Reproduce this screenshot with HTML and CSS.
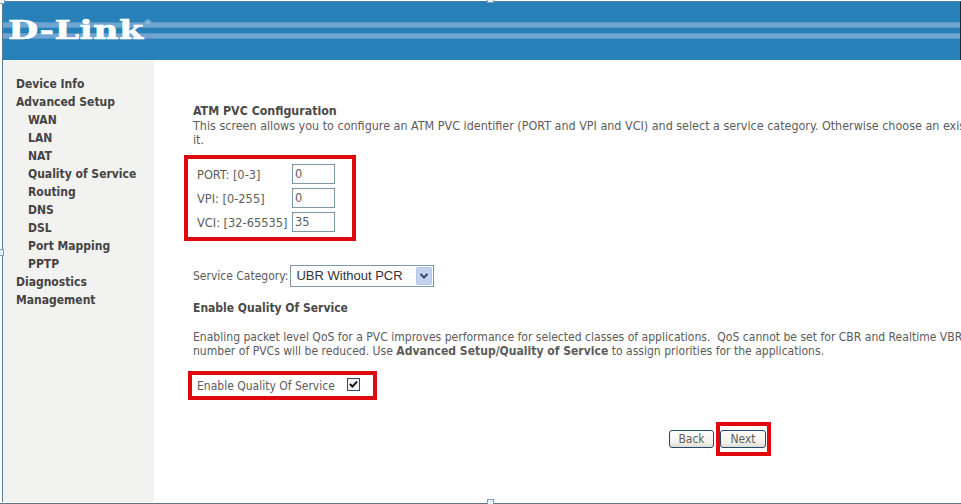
FILE: index.html
```html
<!DOCTYPE html>
<html lang="en">
<head>
    <meta charset="UTF-8">
    <title>ADSL Router - ATM PVC Configuration</title>
    <link rel="stylesheet" href="styles.css">
</head>
<body>
    <div class="frame">
        <div class="header">
            <div class="logo">D-Link<sup class="reg">®</sup></div>
        </div>
        <div class="main">
            <div class="menu">
                <a class="menu-item">Device Info</a>
                <a class="menu-item">Advanced Setup</a>
                <a class="menu-item sub">WAN</a>
                <a class="menu-item sub">LAN</a>
                <a class="menu-item sub">NAT</a>
                <a class="menu-item sub">Quality of Service</a>
                <a class="menu-item sub">Routing</a>
                <a class="menu-item sub">DNS</a>
                <a class="menu-item sub">DSL</a>
                <a class="menu-item sub">Port Mapping</a>
                <a class="menu-item sub">PPTP</a>
                <a class="menu-item">Diagnostics</a>
                <a class="menu-item">Management</a>
            </div>
            <div class="content">
                <div class="intro">
                    <b class="title">ATM PVC Configuration</b><br>
                    This screen allows you to configure an ATM PVC identifier (PORT and VPI and VCI) and select a service category. Otherwise choose an existing interface by selecting it in the list below to modify<br>
                    it.
                </div>
                <div class="mark port-box">
                    <div class="form-row">
                        <label class="port-label" for="port">PORT: [0-3]</label>
                        <input class="num" id="port" type="text" value="0">
                    </div>
                    <div class="form-row">
                        <label class="port-label" for="vpi">VPI: [0-255]</label>
                        <input class="num" id="vpi" type="text" value="0">
                    </div>
                    <div class="form-row">
                        <label class="port-label" for="vci">VCI: [32-65535]</label>
                        <input class="num" id="vci" type="text" value="35">
                    </div>
                </div>
                <div class="service-row">
                    <label for="category">Service Category:</label>
                    <span class="select-wrap">
                        <select class="select" id="category">
                            <option selected>UBR Without PCR</option>
                            <option>UBR With PCR</option>
                            <option>CBR</option>
                        </select>
                        <svg class="select-arrow" width="16" height="18" viewBox="0 0 16 18">
                            <rect x="0.5" y="0.5" width="15" height="17" rx="1.5" fill="#c3d3ee" stroke="#b4c6e6"/>
                            <path d="M4.5 7 8 10.5 11.5 7" fill="none" stroke="#33456b" stroke-width="2"/>
                        </svg>
                    </span>
                </div>
                <div class="qos-title">Enable Quality Of Service</div>
                <div class="qos-text">
                    Enabling packet level QoS for a PVC improves performance for selected classes of applications.&nbsp; QoS cannot be set for CBR and Realtime VBR categories. Also, the total<br>
                    number of PVCs will be reduced. Use <b>Advanced Setup/Quality of Service</b> to assign priorities for the applications.
                </div>
                <div class="mark qos-box">
                    <label class="qos-label">Enable Quality Of Service</label>
                    <svg class="check" width="13" height="13" viewBox="0 0 13 13">
                        <rect x="0.5" y="0.5" width="12" height="12" fill="#eef1f4" stroke="#27506e"/>
                        <path d="M3 6 5.4 8.6 10 3.6" fill="none" stroke="#111" stroke-width="2"/>
                    </svg>
                </div>
                <div class="buttons">
                    <button class="btn" type="button">Back</button>
                    <div class="mark next-box">
                        <button class="btn next" type="button">Next</button>
                    </div>
                </div>
            </div>
        </div>
    </div>
    <span class="handle h-corner"></span>
    <span class="handle h-top"></span>
    <span class="handle h-left"></span>
    <span class="handle h-bottom"></span>
</body>
</html>
```

FILE: styles.css
```css
html, body {
    margin: 0;
    height: 100%;
    overflow: hidden;
    background: #fff;
}
body {
    font-family: "DejaVu Sans", Tahoma, sans-serif;
    font-stretch: condensed;
    font-size: 12px;
    color: #5c5c5c;
}
.frame {
    box-sizing: border-box;
    width: 961px;
    height: 504px;
    padding-left: 2px;
    padding-bottom: 1px;
    display: flex;
    flex-direction: column;
    overflow: hidden;
    border-bottom: 1px solid #5a7a8c;
}
.header {
    flex: none;
    height: 59px;
    margin-top: 1px;
    box-sizing: border-box;
    padding: 14px 0 0 5px;
    border-right: 1px solid #1a2a38;
    border-left: 1px solid #5a7a8c;
    border-top: 1px solid #4a7f9f;
    background-color: #2880b8;
    background-image: linear-gradient(to bottom,
        transparent 20px, #3d8dbf 20px, #6fa5d0 21px, #6fa5d0 25px, #3d8dbf 26px,
        transparent 26px, transparent 31px, #3d8dbf 31px, #6fa5d0 32px, #6fa5d0 36px, #3d8dbf 37px, transparent 37px);
}
.logo {
    display: inline-block;
    font-family: "DejaVu Serif", serif;
    font-stretch: normal;
    font-weight: bold;
    font-size: 26px;
    line-height: 28px;
    color: #fff;
    -webkit-text-stroke: 0.6px #fff;
    letter-spacing: 0.4px;
    transform: scaleX(1.34);
    transform-origin: left center;
}
.reg {
    font-family: "DejaVu Sans", sans-serif;
    font-size: 6px;
    font-weight: normal;
    color: #cfe0ee;
    -webkit-text-stroke: 0;
    vertical-align: 15px;
    line-height: 0;
}
.main {
    flex: 1;
    display: flex;
    min-height: 0;
    border-left: 1px solid #5a7a8c;
}
.menu {
    flex: none;
    width: 151px;
    box-sizing: border-box;
    padding: 15px 0 0 13px;
    background: #f2f2f0;
}
.menu-item {
    display: block;
    height: 18px;
    line-height: 18px;
    color: #444;
    font-weight: bold;
    font-size: 12px;
}
.menu-item.sub {
    padding-left: 12px;
}
.content {
    flex: 1;
    min-width: 0;
    padding: 44px 0 0 30px;
    white-space: nowrap;
    overflow: hidden;
}
.intro {
    margin-left: 9px;
    line-height: 14.5px;
    font-size: 12.45px;
}
.title {
    color: #4a4a4a;
    font-size: 12.3px;
}
.mark {
    box-sizing: border-box;
    border: 4px solid #e0080f;
}
.port-box {
    width: 172px;
    height: 86px;
    margin-top: 7px;
    padding: 5px 0 0 9px;
}
.form-row {
    display: flex;
    align-items: center;
    height: 20px;
    margin-bottom: 4px;
}
.port-label {
    width: 95px;
    padding-top: 2px;
    font-size: 12.7px;
}
.num {
    box-sizing: border-box;
    width: 43px;
    height: 20px;
    padding: 0 2px;
    margin: 0;
    border: 1px solid #7d98a8;
    font: inherit;
    font-size: 12.7px;
    color: #5c5c5c;
}
.service-row {
    display: flex;
    align-items: center;
    margin: 24px 0 0 9px;
    height: 22px;
}
.select-wrap {
    position: relative;
    margin-left: 2px;
    display: block;
    height: 22px;
}
.select {
    appearance: none;
    box-sizing: border-box;
    display: block;
    width: 144px;
    height: 22px;
    margin: 0;
    padding: 0 0 0 5px;
    border: 1px solid #7d98a8;
    border-radius: 0;
    background: #fff;
    font-family: "Liberation Sans", Arial, sans-serif;
    font-size: 13px;
    color: #333;
}
.select-arrow {
    position: absolute;
    right: 2px;
    top: 2px;
}
.qos-title {
    margin: 14px 0 0 9px;
    font-weight: bold;
    line-height: 14px;
    color: #4a4a4a;
}
.qos-text {
    margin: 15px 0 0 9px;
    line-height: 14px;
    font-size: 12.05px;
}
.qos-box {
    display: flex;
    align-items: center;
    width: 189px;
    height: 29px;
    margin: 13px 0 0 4px;
    padding: 1px 0 0 5px;
}
.qos-label {
    width: 150px;
}
.check {
    flex: none;
    margin-top: -3px;
}
.buttons {
    display: flex;
    align-items: center;
    margin: 22px 0 0 485px;
}
.next-box {
    width: 55px;
    height: 34px;
    margin-left: 2px;
    padding: 4px 0 0 0;
}
.btn {
    box-sizing: border-box;
    display: block;
    width: 45px;
    height: 18px;
    padding: 0;
    border: 1px solid #24486e;
    border-radius: 3px;
    background: linear-gradient(to bottom, #fff, #f2f2ea 70%, #dcdcd0);
    font: inherit;
    color: #5c5c5c;
}
.next {
    width: 46px;
    margin: 0;
}
.handle {
    position: absolute;
    box-sizing: border-box;
    width: 7px;
    height: 7px;
    border: 1px solid #7f9db9;
    background: #e8f0f8;
}
.h-corner {
    left: -2px;
    top: -3px;
}
.h-top {
    left: 487px;
    top: -4px;
}
.h-left {
    left: -3px;
    top: 249px;
}
.h-bottom {
    left: 487px;
    top: 499px;
}
```
